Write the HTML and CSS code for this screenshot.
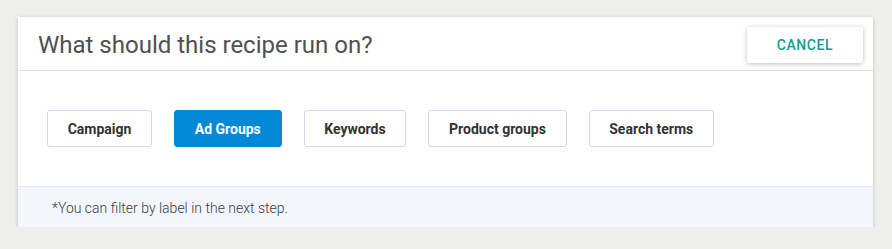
FILE: index.html
```html
<!DOCTYPE html>
<html>
<head>
<meta charset="utf-8">
<link rel="stylesheet" href="styles.css">
</head>
<body>
<div class="card">
  <div class="header">
    <h1 class="title">What should this recipe run on?</h1>
    <button class="cancel">CANCEL</button>
  </div>
  <div class="body">
    <button class="opt">Campaign</button>
    <button class="opt active">Ad Groups</button>
    <button class="opt">Keywords</button>
    <button class="opt">Product groups</button>
    <button class="opt">Search terms</button>
  </div>
  <div class="footer">*You can filter by label in the next step.</div>
</div>
</body>
</html>
```

FILE: styles.css
```css
html, body {
  margin: 0;
  padding: 0;
  background: #efefee;
  font-family: Roboto, "Liberation Sans", sans-serif;
}
body {
  padding: 17px 19px 0 18px;
}
.card {
  width: 855px;
  background: #fff;
  box-shadow: 0 1px 4px rgba(0,0,0,0.22);
}
.header {
  height: 53px;
  display: flex;
  align-items: center;
  justify-content: space-between;
  border-bottom: 1px solid #dcdde3;
  padding: 0 10px 0 20px;
}
.title {
  margin: 0;
  font-size: 24px;
  font-weight: 400;
  color: #505050;
  padding-top: 3px;
}
.cancel {
  width: 116px;
  height: 36px;
  margin-top: 2px;
  border: none;
  border-radius: 2px;
  background: #fff;
  box-shadow: 0 1px 5px rgba(0,0,0,0.25);
  color: #0d9f8d;
  font-family: Roboto, "Liberation Sans", sans-serif;
  font-size: 14px;
  font-weight: 500;
  letter-spacing: 0.6px;
}
.body {
  height: 115px;
  display: flex;
  align-items: flex-start;
  gap: 22px;
  padding: 39px 0 0 29px;
  box-sizing: border-box;
}
.opt {
  height: 37px;
  padding: 0 19.7px;
  border: 1px solid #d5d8e4;
  border-radius: 3px;
  background: #fff;
  color: #333;
  font-family: Roboto, "Liberation Sans", sans-serif;
  font-size: 14px;
  font-weight: 700;
}
.opt.active {
  background: #0288d4;
  border-color: #0288d4;
  color: #fff;
}
.footer {
  height: 41px;
  box-sizing: border-box;
  border-top: 1px solid #e0e4ee;
  background: #f3f6fd;
  padding: 13px 0 0 34px;
  font-size: 14px;
  font-weight: 300;
  color: #3a3a3a;
}
```
